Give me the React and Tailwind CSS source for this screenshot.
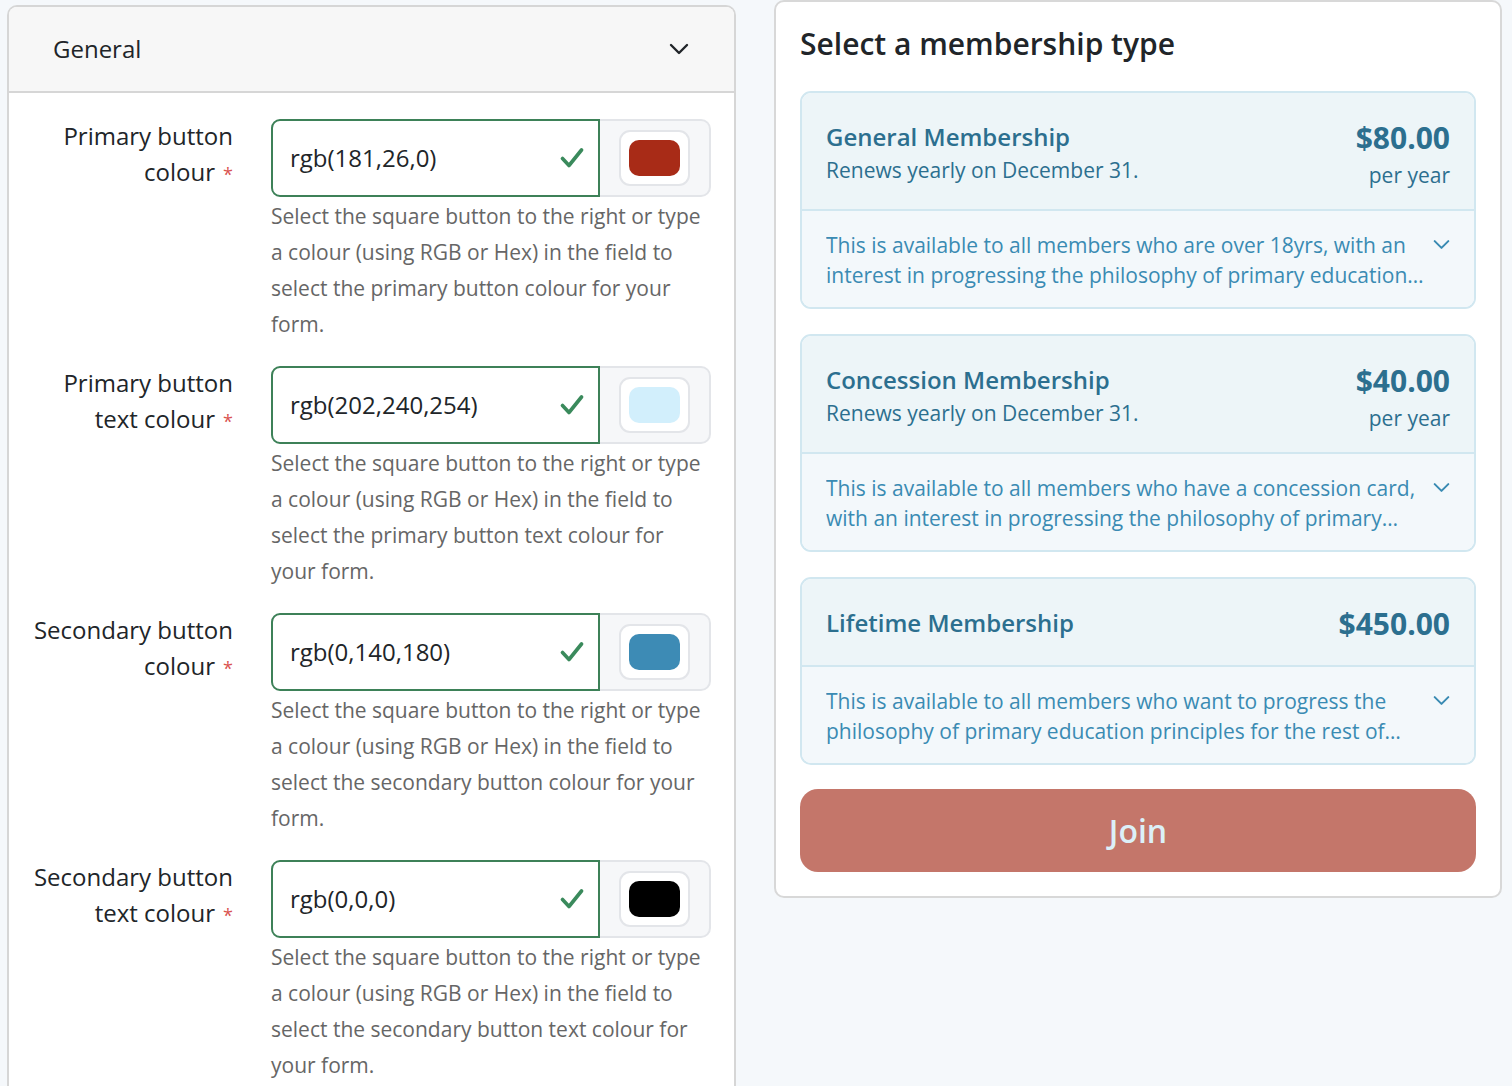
import React from "react";

const rows = [
  {
    label: ["Primary button", "colour"],
    value: "rgb(181,26,0)",
    swatch: "bg-[#a82b17]",
    help: "Select the square button to the right or type a colour (using RGB or Hex) in the field to select the primary button colour for your form.",
  },
  {
    label: ["Primary button", "text colour"],
    value: "rgb(202,240,254)",
    swatch: "bg-[#d2effc]",
    help: "Select the square button to the right or type a colour (using RGB or Hex) in the field to select the primary button text colour for your form.",
  },
  {
    label: ["Secondary button", "colour"],
    value: "rgb(0,140,180)",
    swatch: "bg-[#3d8bb5]",
    help: "Select the square button to the right or type a colour (using RGB or Hex) in the field to select the secondary button colour for your form.",
  },
  {
    label: ["Secondary button", "text colour"],
    value: "rgb(0,0,0)",
    swatch: "bg-black",
    help: "Select the square button to the right or type a colour (using RGB or Hex) in the field to select the secondary button text colour for your form.",
  },
];

const plans = [
  {
    name: "General Membership",
    renews: "Renews yearly on December 31.",
    price: "$80.00",
    per: "per year",
    text: "This is available to all members who are over 18yrs, with an interest in progressing the philosophy of primary education principles in the community.",
  },
  {
    name: "Concession Membership",
    renews: "Renews yearly on December 31.",
    price: "$40.00",
    per: "per year",
    text: "This is available to all members who have a concession card, with an interest in progressing the philosophy of primary education principles in the community.",
  },
  {
    name: "Lifetime Membership",
    price: "$450.00",
    text: "This is available to all members who want to progress the philosophy of primary education principles for the rest of their lives.",
  },
];

function Chevron({ className }) {
  return (
    <svg viewBox="0 0 20 12" fill="none" className={className}>
      <path d="M2 2l8 8 8-8" stroke="currentColor" strokeWidth="2.4" strokeLinecap="round" strokeLinejoin="round" />
    </svg>
  );
}

function Check() {
  return (
    <svg viewBox="0 0 24 22" fill="none" className="w-[24px] h-[22px] text-[#3a8a5c]">
      <path d="M2.5 11.5l6.5 7L21.5 3" stroke="currentColor" strokeWidth="3.6" strokeLinecap="round" strokeLinejoin="round" />
    </svg>
  );
}

function ColourRow({ row }) {
  return (
    <div className="flex">
      <div className="w-[224px] text-right text-[24px] leading-[36px] text-[#212529] -mt-px">
        <div>{row.label[0]}</div>
        <div>
          {row.label[1]}
          <span className="ml-2 text-[18px] text-[#d9534f]">*</span>
        </div>
      </div>
      <div className="ml-[38px] w-[440px]">
        <div className="flex h-[78px]">
          <div className="flex-1 flex items-center justify-between bg-white border-2 border-[#3d8158] rounded-l-[9px] pl-[17px] pr-[14px]">
            <span className="text-[24px] text-[#212529]">{row.value}</span>
            <Check />
          </div>
          <div className="w-[111px] flex items-center justify-center bg-[#f6f7f9] border-2 border-l-0 border-[#e3e5e9] rounded-r-[10px]">
            <div className="w-[71px] h-[56px] flex items-center justify-center bg-white border-2 border-[#e3e5e9] rounded-[11px]">
              <div className={`w-[51px] h-[36px] rounded-[10px] ${row.swatch}`} />
            </div>
          </div>
        </div>
        <p className="mt-px text-[21px] leading-[36px] text-[#666666]">{row.help}</p>
      </div>
    </div>
  );
}

function PlanCard({ plan }) {
  return (
    <div className="border-2 border-[#d1e7f0] rounded-[11px] overflow-hidden">
      <div className="flex items-start justify-between bg-[#edf5f8] px-6 pt-[27px] pb-[23px] border-b-2 border-[#d1e7f0]">
        <div className="text-[#2c6f8f]">
          <div className="text-[24px] leading-[34px] font-semibold">{plan.name}</div>
          {plan.renews && <div className="text-[21px] leading-[32px]">{plan.renews}</div>}
        </div>
        <div className="text-right text-[#2c6f8f]">
          <div className="text-[30px] leading-[36px] font-bold">{plan.price}</div>
          {plan.per && <div className="mt-[4px] -mb-[4px] text-[21px] leading-[30px]">{plan.per}</div>}
        </div>
      </div>
      <div className="flex items-start gap-2 bg-[#f3f8fb] px-6 pt-[19px] pb-[17px]">
        <p className="flex-1 text-[21px] leading-[30px] text-[#3a8bb3] line-clamp-2">{plan.text}</p>
        <Chevron className="w-[17px] h-[11px] mt-[9px] text-[#3a8bb3]" />
      </div>
    </div>
  );
}

export default function App() {
  return (
    <div className="h-[1086px] overflow-hidden bg-[#f5f8fb] flex items-start gap-[38px] pl-[7px] font-['Open_Sans',sans-serif]">
      {/* Settings */}
      <div className="mt-[5px] w-[729px] shrink-0 bg-white border-2 border-b-0 border-[#d6d6d6] rounded-t-[10px] overflow-hidden">
        <div className="h-[86px] flex items-center justify-between bg-[#f7f7f7] pl-[44px] pr-[45px] border-b-2 border-[#d6d6d6]">
          <span className="text-[24px] text-[#212529]">General</span>
          <Chevron className="w-[20px] h-[12px] text-[#212529]" />
        </div>
        <div className="pt-[26px] pb-10 flex flex-col gap-6">
          {rows.map((r) => (
            <ColourRow key={r.value} row={r} />
          ))}
        </div>
      </div>

      {/* Preview */}
      <div className="w-[728px] shrink-0 bg-white border-2 border-[#d8d8d8] rounded-[10px] px-6 pt-[22px] pb-[24px]">
        <h2 className="text-[30px] leading-[40px] font-semibold text-[#212529]">Select a membership type</h2>
        <div className="mt-[27px] flex flex-col gap-[25px]">
          {plans.map((p) => (
            <PlanCard key={p.name} plan={p} />
          ))}
        </div>
        <button className="mt-[24px] w-full h-[83px] rounded-[18px] bg-[#c4766a] text-[32px] font-semibold text-[#dcf0f8]">
          Join
        </button>
      </div>
    </div>
  );
}
